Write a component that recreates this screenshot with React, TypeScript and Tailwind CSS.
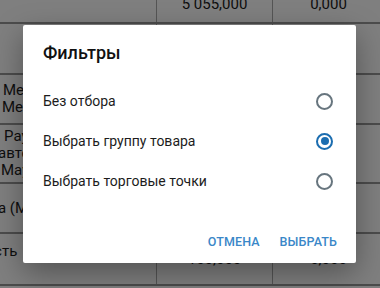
import React from "react";

type Row = { h: string; align: string; num: string; left: { text: string; ml: string }[]; a: string; b: string };

const rows: Row[] = [
  { h: "h-[44px]", align: "justify-center", num: "pt-[6px]", left: [], a: "5 055,000", b: "0,000" },
  { h: "h-[51px]", align: "justify-center", num: "", left: [], a: "", b: "" },
  {
    h: "h-[50px]",
    align: "justify-center",
    num: "",
    left: [
      { text: "Межгород Мясо", ml: "ml-[3px]" },
      { text: "Мехзавод", ml: "ml-[2px]" },
    ],
    a: "",
    b: "",
  },
  {
    h: "h-[59px]",
    align: "justify-center",
    num: "",
    left: [
      { text: "Раушен", ml: "ml-[4px]" },
      { text: "автомагазин", ml: "-ml-[2px]" },
      { text: "Маугли", ml: "ml-[1px]" },
    ],
    a: "",
    b: "",
  },
  { h: "h-[50px]", align: "justify-center", num: "", left: [{ text: "Правда (Мясо)", ml: "-ml-[47px]" }], a: "", b: "" },
  {
    h: "h-[52px]",
    align: "justify-start pt-[9px]",
    num: "",
    left: [{ text: "Ответственность", ml: "-ml-[104px]" }],
    a: "100,000",
    b: "0,000",
  },
];

const options = [
  { label: "Без отбора", checked: false },
  { label: "Выбрать группу товара", checked: true },
  { label: "Выбрать торговые точки", checked: false },
];

function Radio({ checked }: { checked: boolean }) {
  return (
    <div
      className={`w-[17px] h-[17px] rounded-full border-2 flex items-center justify-center ${
        checked ? "border-[#1b6db0]" : "border-[#67757e]"
      }`}
    >
      {checked && <div className="w-[8px] h-[8px] rounded-full bg-[#1b6db0]" />}
    </div>
  );
}

export default function App() {
  return (
    <div className="relative w-[380px] h-[288px] overflow-hidden bg-[#7f7f7f] font-['Roboto',sans-serif]">
      {/* table behind the overlay */}
      <div className="-mt-[20px] text-[15px] text-[#0e0e0e]">
        {rows.map((r, i) => (
          <div key={i} className={`flex ${r.h} border-b-2 border-[#4c4c4c]`}>
            <div className={`w-[156px] overflow-hidden flex flex-col ${r.align} leading-[17px] whitespace-nowrap`}>
              {r.left.map((l, j) => (
                <span key={j} className={l.ml}>
                  {l.text}
                </span>
              ))}
            </div>
            <div className={`w-[116px] border-l border-[#555] flex items-center justify-center ${r.num}`}>{r.a}</div>
            <div className={`flex-1 border-l border-[#555] flex items-center justify-center pl-[4px] ${r.num}`}>{r.b}</div>
          </div>
        ))}
      </div>

      {/* dialog */}
      <div className="absolute left-[23px] top-[25px] w-[333px] h-[238px] bg-white rounded-[2px] shadow-[0_10px_30px_rgba(0,0,0,0.35)] flex flex-col">
        <div className="pt-[16px] pl-[20px] h-[56px] text-[18px] leading-[24px] font-medium text-[#111]">Фильтры</div>
        <div className="flex flex-col">
          {options.map((o) => (
            <div key={o.label} className="h-[40px] flex items-center justify-between pl-[20px] pr-[23px]">
              <span className="text-[14px] text-[#1c1c1c]">{o.label}</span>
              <Radio checked={o.checked} />
            </div>
          ))}
        </div>
        <div className="flex-1" />
        <div className="h-[36px] mb-[3px] flex items-center justify-end gap-[20px] pr-[19px] text-[12.5px] tracking-[0.1px] font-medium text-[#3a87c8] uppercase">
          <span>Отмена</span>
          <span>Выбрать</span>
        </div>
      </div>
    </div>
  );
}
